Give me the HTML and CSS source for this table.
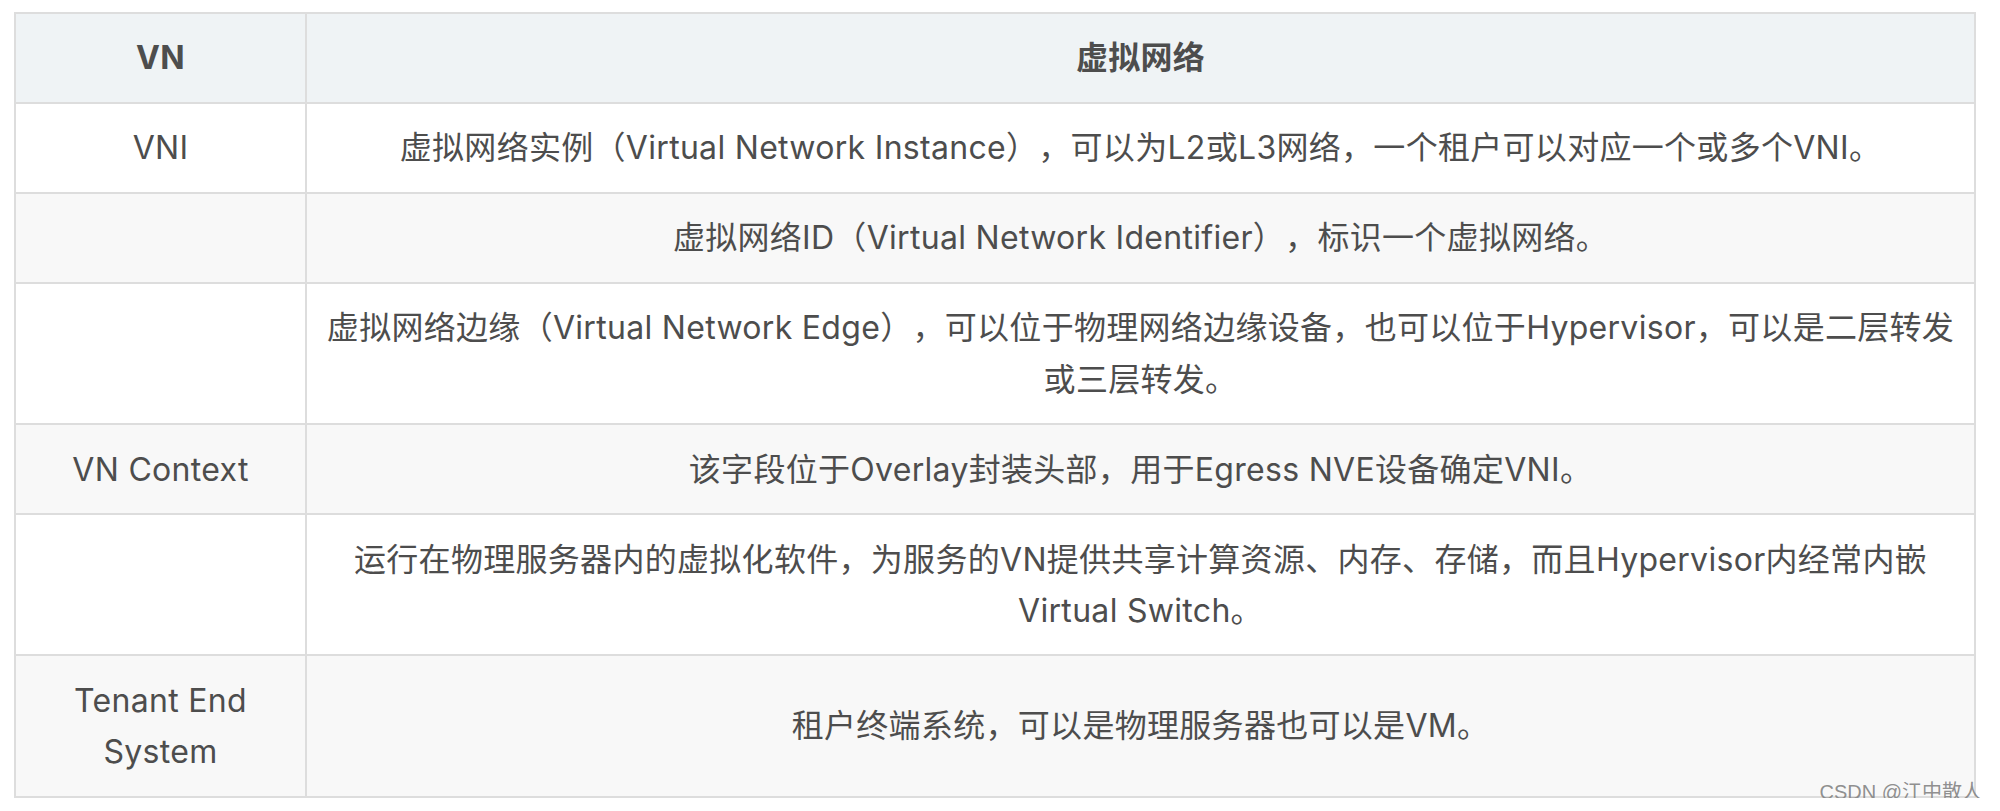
FILE: index.html
```html
<!DOCTYPE html>
<html lang="zh-CN">
<head>
<meta charset="utf-8">
<title>VN 虚拟网络</title>
<link rel="stylesheet" href="styles.css">
</head>
<body>
<div class="page">
  <table class="terms">
    <colgroup>
      <col class="col-term">
      <col class="col-desc">
    </colgroup>
    <thead>
      <tr><th>VN</th><th>虚拟网络</th></tr>
    </thead>
    <tbody>
      <tr><td>VNI</td><td>虚拟网络实例（Virtual Network Instance），可以为L2或L3网络，一个租户可以对应一个或多个VNI。</td></tr>
      <tr><td></td><td>虚拟网络ID（Virtual Network Identifier），标识一个虚拟网络。</td></tr>
      <tr><td></td><td>虚拟网络边缘（Virtual Network Edge），可以位于物理网络边缘设备，也可以位于Hypervisor，可以是二层转发或三层转发。</td></tr>
      <tr><td>VN Context</td><td>该字段位于Overlay封装头部，用于Egress NVE设备确定VNI。</td></tr>
      <tr><td></td><td>运行在物理服务器内的虚拟化软件，为服务的VN提供共享计算资源、内存、存储，而且Hypervisor内经常内嵌Virtual Switch。</td></tr>
      <tr><td>Tenant End System</td><td>租户终端系统，可以是物理服务器也可以是VM。</td></tr>
    </tbody>
  </table>
  <div class="watermark">CSDN @江中散人</div>
</div>
</body>
</html>
```

FILE: styles.css
```css
html, body {
  margin: 0;
  padding: 0;
  background: #ffffff;
}

.page {
  position: relative;
  width: 1962px;
  padding: 12px 0 0 14px;
}

.terms {
  width: 1962px;
  table-layout: fixed;
  border-collapse: collapse;
  font-family: "Inter", "Noto Sans CJK SC", sans-serif;
  font-size: 32px;
  line-height: 51.2px;
  letter-spacing: 0.3px;
  color: #4d4d4d;
  text-spacing-trim: space-all;
}

.col-term {
  width: 291px;
}

.terms th,
.terms td {
  border: 2px solid #dddddd;
  padding: 18.4px 12px;
  text-align: center;
  vertical-align: middle;
}

.terms th {
  background: #eff3f5;
  font-weight: 700;
}

.terms tbody tr:nth-child(2n) {
  background: #f8f8f8;
}

.watermark {
  position: absolute;
  right: -6px;
  bottom: -6px;
  font-family: "Liberation Sans", "Noto Sans CJK SC", sans-serif;
  font-size: 20px;
  line-height: 24px;
  color: rgba(130, 130, 130, 0.9);
}
```
